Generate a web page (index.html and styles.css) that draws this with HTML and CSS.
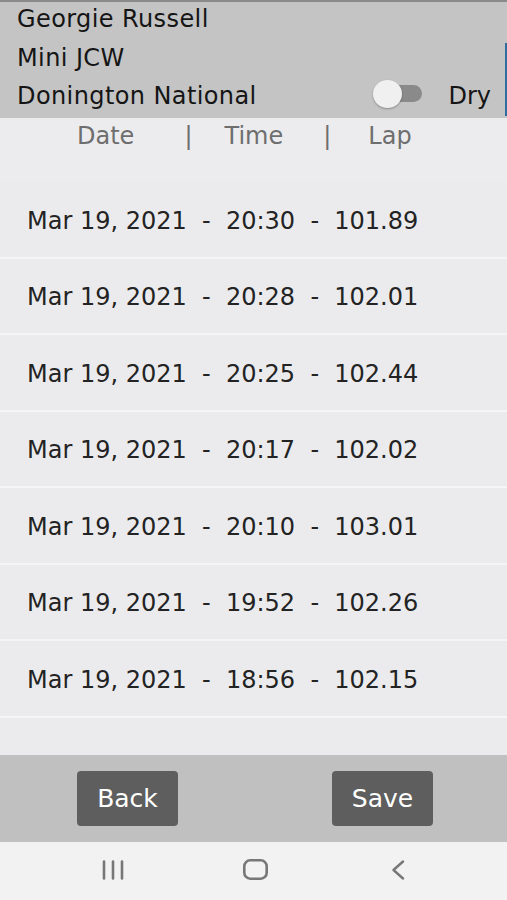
FILE: index.html
```html
<!DOCTYPE html>
<html lang="en">
<head>
  <meta charset="UTF-8" />
  <meta name="viewport" content="width=device-width, initial-scale=1" />
  <title>Lap Times</title>
  <link rel="stylesheet" href="styles.css">
</head>
<body>
  <div class="screen">
    <header class="info">
      <div class="info-line">Georgie Russell</div>
      <div class="info-line">Mini JCW</div>
      <div class="info-line track-line">
        <span class="track-name">Donington National</span>
        <span class="switch" aria-label="Wet / Dry"><span class="switch-thumb"></span></span>
        <span class="switch-label">Dry</span>
      </div>
    </header>

    <div class="columns">
      <span class="col col-date">Date</span>
      <span class="col-sep sep-1">|</span>
      <span class="col col-time">Time</span>
      <span class="col-sep sep-2">|</span>
      <span class="col col-lap">Lap</span>
    </div>

    <ul class="laps">
      <li class="lap">Mar 19, 2021  -  20:30  -  101.89</li>
      <li class="lap">Mar 19, 2021  -  20:28  -  102.01</li>
      <li class="lap">Mar 19, 2021  -  20:25  -  102.44</li>
      <li class="lap">Mar 19, 2021  -  20:17  -  102.02</li>
      <li class="lap">Mar 19, 2021  -  20:10  -  103.01</li>
      <li class="lap">Mar 19, 2021  -  19:52  -  102.26</li>
      <li class="lap">Mar 19, 2021  -  18:56  -  102.15</li>
      <li class="lap"></li>
    </ul>

    <div class="actions">
      <button class="btn">Back</button>
      <button class="btn">Save</button>
    </div>

    <nav class="sysnav">
      <svg class="nav-icon nav-recent" width="22" height="20" viewBox="0 0 22 20" aria-hidden="true">
        <path d="M2 1.5v17M11 1.5v17M20 1.5v17" stroke="#777" stroke-width="2.6" stroke-linecap="round" fill="none"/>
      </svg>
      <svg class="nav-icon nav-home" width="25" height="21" viewBox="0 0 25 21" aria-hidden="true">
        <rect x="1.3" y="1.3" width="22.4" height="18.4" rx="6" stroke="#777" stroke-width="2.6" fill="none"/>
      </svg>
      <svg class="nav-icon nav-back" width="14" height="20" viewBox="0 0 14 20" aria-hidden="true">
        <path d="M12 1.5L2.5 10l9.5 8.5" stroke="#777" stroke-width="2.4" stroke-linecap="round" stroke-linejoin="round" fill="none"/>
      </svg>
    </nav>
  </div>
</body>
</html>
```

FILE: styles.css
```css
/* Reset */
* {
  box-sizing: border-box;
}
html, body {
  margin: 0;
  padding: 0;
  height: 100%;
}
body {
  font-family: "DejaVu Sans", Roboto, sans-serif;
  font-size: 24px;
  background: #ebebed;
  color: #222;
  -webkit-font-smoothing: antialiased;
}

.screen {
  height: 900px;
  display: flex;
  flex-direction: column;
  overflow: hidden;
}

/* Driver / car / circuit header */
.info {
  position: relative;
  height: 118px;
  flex-shrink: 0;
  padding: 0 0 0 17px;
  background: #c4c4c4;
  box-shadow: inset 0 2px 0 #8a8a8a;
  color: #151515;
  letter-spacing: 0.4px;
}
.info::after {
  content: "";
  position: absolute;
  right: 0;
  top: 43px;
  bottom: 2px;
  width: 2px;
  background: #2f6d9e;
}
.info-line {
  line-height: 38.5px;
  height: 38.5px;
}
.track-line {
  display: flex;
  align-items: center;
}
.track-name {
  flex: 1;
}

.switch {
  position: relative;
  width: 46px;
  height: 17px;
  margin-top: -6px;
  border-radius: 9px;
  background: #8a8a8a;
}
.switch-thumb {
  position: absolute;
  left: -3px;
  top: -5px;
  width: 29px;
  height: 28px;
  border-radius: 50%;
  background: #f0f0f0;
  box-shadow: 0 1px 2px rgba(0 0 0 / 0.3);
}
.switch-label {
  margin: 0 16px 0 26px;
  letter-spacing: 0;
}

/* Column titles */
.columns {
  height: 64px;
  flex-shrink: 0;
  display: flex;
  padding-left: 77px;
  line-height: 37.4px;
  color: #6e6e6e;
  background: #ececee;
}
.sep-1 { margin-left: 50px; }
.col-time { margin-left: 32px; }
.sep-2 { margin-left: 40px; }
.col-lap { margin-left: 37px; }

/* Lap list */
.laps {
  flex: 1;
  list-style: none;
  margin: 0;
  padding: 0;
  overflow: hidden;
}
.lap {
  height: 76.5px;
  padding: 3px 0 0 27px;
  border-bottom: 2px solid #f5f5f7;
  display: flex;
  align-items: center;
  white-space: pre;
  color: #232323;
}

/* Back / Save */
.actions {
  height: 87px;
  flex-shrink: 0;
  display: flex;
  justify-content: space-between;
  padding: 16px 74px 0 77px;
  background: #c0c0c0;
}
.btn {
  width: 101px;
  height: 55px;
  border: none;
  border-radius: 4px;
  background: #5e5e5e;
  color: #fff;
  font-family: "DejaVu Sans", Roboto, sans-serif;
  font-size: 25px;
  cursor: pointer;
}

/* Android navigation bar */
.sysnav {
  height: 58px;
  flex-shrink: 0;
  display: flex;
  align-items: center;
  padding-left: 102px;
  background: #f2f2f2;
}
.nav-icon {
  display: block;
  margin-top: -3px;
}
.nav-home { margin-left: 119px; }
.nav-back { margin-left: 123px; }
```
